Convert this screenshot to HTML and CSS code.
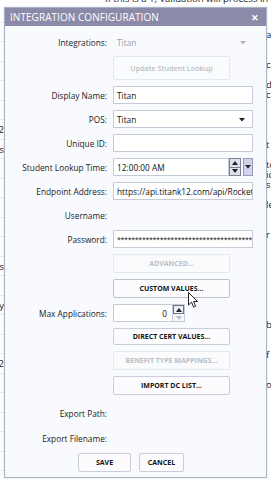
FILE: index.html
```html
<!DOCTYPE html>
<html lang="en">
<head>
	<meta charset="UTF-8">
	<title>Integration Configuration</title>
	<link rel="stylesheet" href="styles.css">
</head>
<body>
	<div class="page">
		<p class="bg-top">If this is a 1, Validation will process in legacy mode</p>
		<div class="bg-body">
			<div class="bg-left">
				<div></div><div></div><div></div><div></div><div></div><div></div>
				<div>2</div><div>ds</div><div></div><div></div><div></div><div></div>
				<div></div><div>ls</div><div></div><div>ly</div><div></div><div></div>
				<div>12</div><div></div><div></div><div></div><div></div><div></div>
			</div>
<pre class="bg-right">a


cl

d
c




t

te
ic
sh

le


r








b


f


o</pre>
		</div>
	</div>

	<div class="dialog">
		<div class="titlebar">
			<span>INTEGRATION CONFIGURATION</span>
			<span class="close">&#x2715;</span>
		</div>

		<div class="form">
			<div class="row short">
				<label>Integrations:</label>
				<div class="combo off">Titan
					<svg class="arrow" width="6" height="4" viewBox="0 0 6 4"><polygon points="0,0 6,0 3,3.5" fill="#b4b4bc"/></svg>
				</div>
			</div>
			<div class="row tall">
				<label></label>
				<button class="btn wide disabled big">Update Student Lookup</button>
			</div>
			<div class="row">
				<label>Display Name:</label>
				<div class="field">Titan</div>
			</div>
			<div class="row">
				<label>POS:</label>
				<div class="field combo">Titan
					<svg class="arrow" width="6" height="4" viewBox="0 0 6 4"><polygon points="0,0 6,0 3,3.5" fill="#222"/></svg>
				</div>
			</div>
			<div class="row">
				<label>Unique ID:</label>
				<div class="field"></div>
			</div>
			<div class="row">
				<label>Student Lookup Time:</label>
				<div class="time">
					<div class="field time-input">12:00:00 AM</div>
					<div class="spin dark">
						<span><svg width="6" height="4" viewBox="0 0 6 4"><polygon points="0,4 6,4 3,0" fill="#222"/></svg></span>
						<span><svg width="6" height="4" viewBox="0 0 6 4"><polygon points="0,0 6,0 3,4" fill="#222"/></svg></span>
					</div>
					<div class="drop"><svg width="6" height="4" viewBox="0 0 6 4"><polygon points="0,0 6,0 3,3.5" fill="#222"/></svg></div>
				</div>
			</div>
			<div class="row">
				<label>Endpoint Address:</label>
				<div class="field">https://api.titank12.com/api/RocketService</div>
			</div>
			<div class="row">
				<label>Username:</label>
			</div>
			<div class="row">
				<label>Password:</label>
				<div class="field stars">**************************************************</div>
			</div>
			<div class="row btn-row">
				<label></label>
				<button class="btn wide disabled">ADVANCED...</button>
			</div>
			<div class="row btn-row">
				<label></label>
				<button class="btn wide hover">CUSTOM VALUES...</button>
			</div>
			<div class="row">
				<label>Max Applications:</label>
				<div class="num">
					<div class="field num-input">0</div>
					<div class="spin">
						<span class="up"><svg width="6" height="4" viewBox="0 0 6 4"><polygon points="0,4 6,4 3,0" fill="#222"/></svg></span>
						<span class="down"><svg width="6" height="4" viewBox="0 0 6 4"><polygon points="0,0 6,0 3,4" fill="#b8bcc6"/></svg></span>
					</div>
				</div>
			</div>
			<div class="row btn-row slim">
				<label></label>
				<button class="btn wide">DIRECT CERT VALUES...</button>
			</div>
			<div class="row btn-row">
				<label></label>
				<button class="btn wide disabled">BENEFIT TYPE MAPPINGS...</button>
			</div>
			<div class="row btn-row">
				<label></label>
				<button class="btn wide">IMPORT DC LIST...</button>
			</div>
			<div class="row tall">
				<label>Export Path:</label>
			</div>
			<div class="row low">
				<label>Export Filename:</label>
			</div>
		</div>

		<div class="footer">
			<button class="btn save">SAVE</button>
			<button class="btn cancel">CANCEL</button>
		</div>
	</div>

	<svg class="cursor" width="11" height="17" viewBox="0 0 11 17">
		<path d="M0.5,0.5 L0.5,13 L3.5,10.2 L5.6,15.2 L7.6,14.3 L5.6,9.5 L9.5,9.5 Z" fill="#fff" stroke="#222" stroke-width="1"/>
	</svg>
</body>
</html>
```

FILE: styles.css
```css
* {
	box-sizing: border-box;
}

body {
	margin: 0;
	width: 271px;
	height: 481px;
	overflow: hidden;
	position: relative;
	background: #fff;
	font-family: "Open Sans", sans-serif;
	color: #1e1e1e;
}

/* page behind the dialog */
.page {
	height: 100%;
}

.bg-top {
	margin: -7px 0 0 105px;
	font-size: 9.5px;
	line-height: 12px;
	white-space: nowrap;
	color: #222;
}

.bg-body {
	display: flex;
	justify-content: space-between;
}

.bg-left {
	width: 4px;
	overflow: hidden;
	margin-top: -2px;
}

.bg-left div {
	height: 19.5px;
	line-height: 19px;
	font-size: 9.5px;
	text-align: right;
	direction: rtl;
	color: #222;
	border-bottom: 1px solid #e4e6ea;
}

.bg-right {
	width: 5px;
	margin: 25px 0 0;
	overflow: hidden;
	font-family: "Open Sans", sans-serif;
	font-size: 9.5px;
	line-height: 10px;
	color: #222;
}

/* dialog */
.dialog {
	position: absolute;
	left: 4px;
	top: 7px;
	width: 263px;
	height: 471px;
	border: 1px solid #a9b3c6;
	background: #f9fafd;
	box-shadow: 0 0 2px rgba(90, 100, 130, 0.25);
}

.titlebar {
	height: 18px;
	background: #8b8ba9;
	color: #fff;
	display: flex;
	align-items: center;
	justify-content: space-between;
	padding: 0 7px 0 5px;
	font-size: 10px;
	letter-spacing: 0.05px;
}

.close {
	font-size: 9px;
	font-weight: bold;
}

.form {
	padding-top: 8px;
	display: flex;
	flex-direction: column;
	gap: 6px;
}

.row {
	display: flex;
	align-items: center;
	gap: 6px;
	height: 18px;
	font-size: 8.3px;
}

.row.short {
	height: 16px;
}

.row.tall {
	height: 24px;
}

.row.low {
	height: 14px;
}

.row.btn-row {
	height: 19px;
}

.row.slim {
	height: 17px;
}

label {
	width: 102px;
	flex: none;
	text-align: right;
	color: #222;
}

.field {
	width: 140px;
	height: 100%;
	background: #fff;
	border: 1px solid #c6cad6;
	padding: 0 3px;
	display: flex;
	align-items: center;
	white-space: nowrap;
	overflow: hidden;
	color: #111;
}

.combo {
	position: relative;
	width: 140px;
	height: 100%;
	display: flex;
	align-items: center;
	padding: 0 4px;
}

.combo.field {
	padding: 0 3px;
}

.combo.off {
	color: #9c9ca4;
}

.arrow {
	position: absolute;
	right: 7px;
	top: 7px;
}

.stars {
	font-size: 7px;
	letter-spacing: -0.3px;
}

.time,
.num {
	display: flex;
	height: 100%;
}

.time-input {
	width: 116px;
}

.spin {
	width: 12px;
	display: flex;
	flex-direction: column;
	background: #e6e8f0;
	border: 1px solid #c6cad6;
	border-left: none;
}

.spin span {
	flex: 1;
	display: flex;
	align-items: center;
	justify-content: center;
}

.spin.dark {
	border: 1px solid #7d8292;
	background: #dfe2ea;
	margin-right: 2px;
}

.spin.dark span + span {
	border-top: 1px solid #7d8292;
}

.spin .up {
	border: 1px solid #6f7484;
	background: #eef0f5;
}

.spin .down {
	background: #f5f6fa;
}

.drop {
	width: 10px;
	background: #d2d2ec;
	border: 1px solid #9a9abf;
	display: flex;
	align-items: center;
	justify-content: center;
}

.num-input {
	width: 60px;
	justify-content: flex-end;
	padding-right: 5px;
}

.btn {
	height: 100%;
	font-family: "Open Sans", sans-serif;
	font-size: 7px;
	font-weight: bold;
	color: #141414;
	background: #fcfcfe;
	border: 1px solid #c9cdd9;
	border-radius: 2px;
	padding: 0;
}

.btn.wide {
	width: 117px;
}

.btn.big {
	font-size: 7.2px;
	font-weight: 600;
}

.btn.disabled {
	color: #b9bdc7;
	border-color: #e3e7ee;
	background: #f9fbfd;
}

.btn.hover {
	border-color: #bcc1d0;
}

.footer {
	display: flex;
	justify-content: center;
	gap: 8px;
	padding-right: 9px;
	margin-top: 8px;
	height: 19px;
}

.save {
	width: 53px;
}

.cancel {
	width: 45px;
}

.cursor {
	position: absolute;
	left: 188px;
	top: 292px;
}
```
